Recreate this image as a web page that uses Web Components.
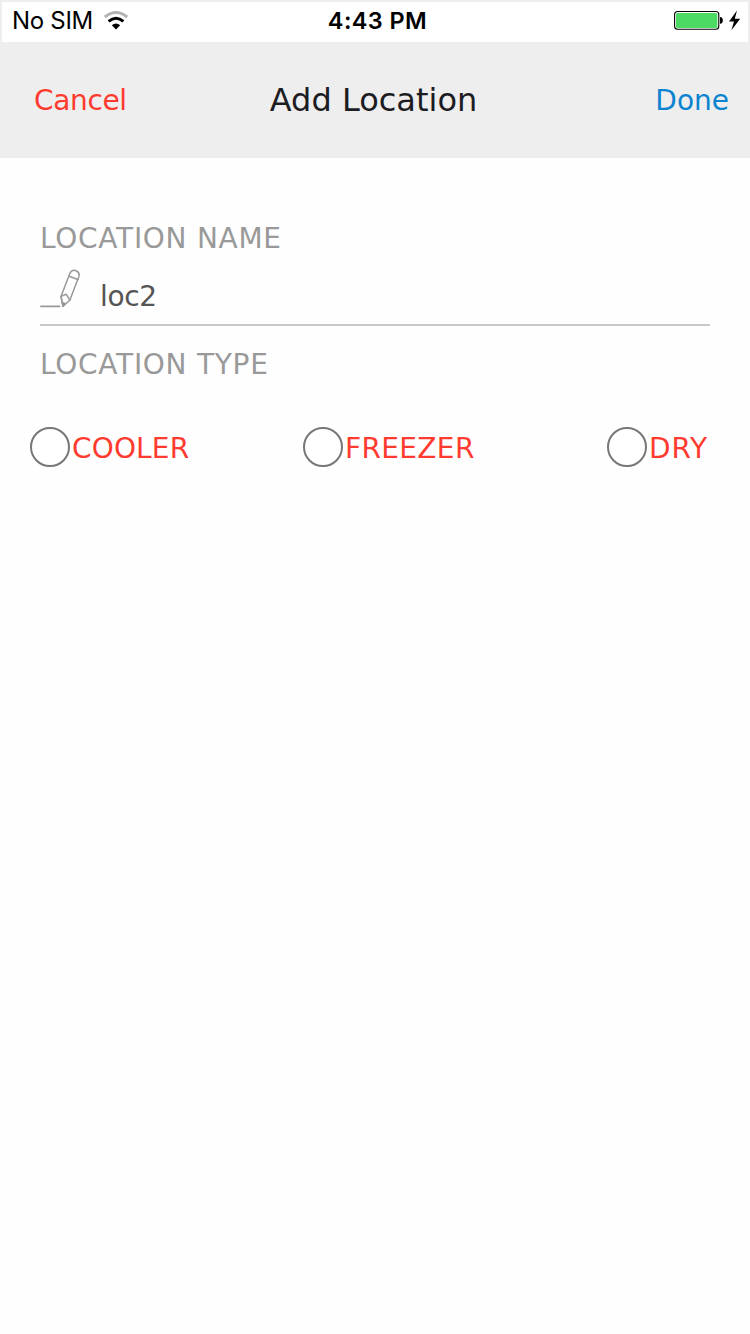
<!DOCTYPE html>
<html lang="en">
<head>
<meta charset="utf-8">
<title>Add Location</title>
<style>
html, body { margin: 0; height: 100%; background: #fefefe; }
body { font-family: "DejaVu Sans", Verdana, sans-serif; overflow: hidden; }
</style>
</head>
<body>
<location-screen></location-screen>
<script>
function define(name, html) {
  const template = document.createElement('template');
  template.innerHTML = html;
  customElements.define(name, class extends HTMLElement {
    constructor() {
      super();
      this.attachShadow({ mode: 'open' }).append(template.content.cloneNode(true));
    }
  });
}

define('status-bar', `
<style>
:host { display: grid; grid-template-columns: 1fr auto 1fr; align-items: center; box-sizing: border-box; height: 42px; padding-bottom: 2px; border: 2px solid #eee; border-bottom: 0; background: #fff; color: #000; font: 24px/38px Inter, sans-serif; white-space: nowrap; }
.left, .right { display: flex; align-items: center; }
.left { padding-left: 10px; gap: 10px; letter-spacing: -.3px; }
.time { font-weight: 600; font-size: 23.5px; letter-spacing: .4px; padding-left: 5px; }
.right { justify-content: flex-end; padding-right: 6px; }
svg { display: block; }
</style>
<div class="left"><span>No SIM</span>
<svg width="26" height="20" viewBox="0 .7 26 20" fill="none" stroke-width="3"><path d="M1.8 6.7Q13-2.3 24.2 6.7" stroke="#b3b3b3"/><path d="M5.6 11Q13 4.8 20.4 11" stroke="#000"/><path d="M8.8 15Q13 11.4 17.2 15L13 19.2Z" fill="#000" stroke="none"/></svg></div>
<span class="time">4:43 PM</span>
<div class="right"><svg width="68" height="24" viewBox="0 .7 68 24"><rect x=".6" y="3.2" width="44.2" height="17.8" rx="3" fill="#fff" stroke="#000" stroke-width="1.1"/><rect x="2" y="4.6" width="41.4" height="15" rx="1.6" fill="#4cd964"/><path d="M46 8.8q2.8 .2 2.8 3.3t-2.8 3.3Z"/><path d="M63 2.2L55 13.2h5L57.4 22 66.2 10.5h-5.4Z"/></svg></div>`);

define('nav-bar', `
<style>
:host { display: grid; grid-template-columns: 1fr auto 1fr; align-items: center; box-sizing: border-box; height: 116px; padding: 0 21px 0 34px; background: #eee; white-space: nowrap; }
.start { color: #ff3b30; font-size: 28px; letter-spacing: -.35px; }
.title { color: #1c1c22; font-size: 32px; padding-right: 16px; }
.end { color: #0a84d0; font-size: 28px; text-align: right; }
</style>
<span class="start"><slot name="start"></slot></span><span class="title"><slot></slot></span><span class="end"><slot name="end"></slot></span>`);

define('field-label', `
<style>
:host { display: block; color: #999; font-size: 28px; line-height: 40px; letter-spacing: .72px; white-space: nowrap; }
</style><slot></slot>`);

define('text-field', `
<style>
:host { display: flex; align-items: center; height: 67px; box-sizing: border-box; border-bottom: 2px solid #c8c8c8; color: #555; font-size: 28px; letter-spacing: -.35px; gap: 20px; }
svg { display: block; margin-bottom: 5px; }
span { padding-top: 9px; }
</style>
<svg width="40" height="40" viewBox="0 0 40 40" fill="none" stroke="#999" stroke-width="1.5" stroke-linejoin="round" stroke-linecap="round"><path d="M1 37.4h18.6" stroke-width="1.8"/><path d="M21 27.4L29.8 4.4Q31.8.2 36 1.7 40.3 3.5 38.8 7.7L29.8 31.2 23 37.2Z"/><path d="M29.2 7.2l8.7 3.3M21 27.4l5.2-2.2 3.6 6M21 27.4l2 9.8"/><path d="M22.3 33.4l3.2 1.3-2.6 2.5Z" fill="#888"/></svg>
<span><slot></slot></span>`);

define('radio-option', `
<style>
:host { display: flex; align-items: center; gap: 2px; color: #ff3b30; font-size: 28px; line-height: 40px; letter-spacing: var(--tracking, .35px); white-space: nowrap; }
i { box-sizing: border-box; width: 40px; height: 40px; margin-bottom: 4px; border: 2px solid #777; border-radius: 50%; background: #fff; }
</style><i></i><span><slot></slot></span>`);

define('location-screen', `
<style>
:host { display: block; height: 100%; }
form { padding: 61px 40px 0; }
text-field { margin-bottom: 19px; }
.options { display: grid; grid-template-columns: 273px 304px auto; margin: 42px 0 0 -10px; }
.options :first-child { --tracking: .15px; }
.options :last-child { --tracking: .9px; }
</style>
<status-bar></status-bar>
<nav-bar><span slot="start">Cancel</span>Add Location<span slot="end">Done</span></nav-bar>
<form>
<field-label>LOCATION NAME</field-label>
<text-field>loc2</text-field>
<field-label>LOCATION TYPE</field-label>
<div class="options"><radio-option>COOLER</radio-option><radio-option>FREEZER</radio-option><radio-option>DRY</radio-option></div>
</form>`);
</script>
</body>
</html>
